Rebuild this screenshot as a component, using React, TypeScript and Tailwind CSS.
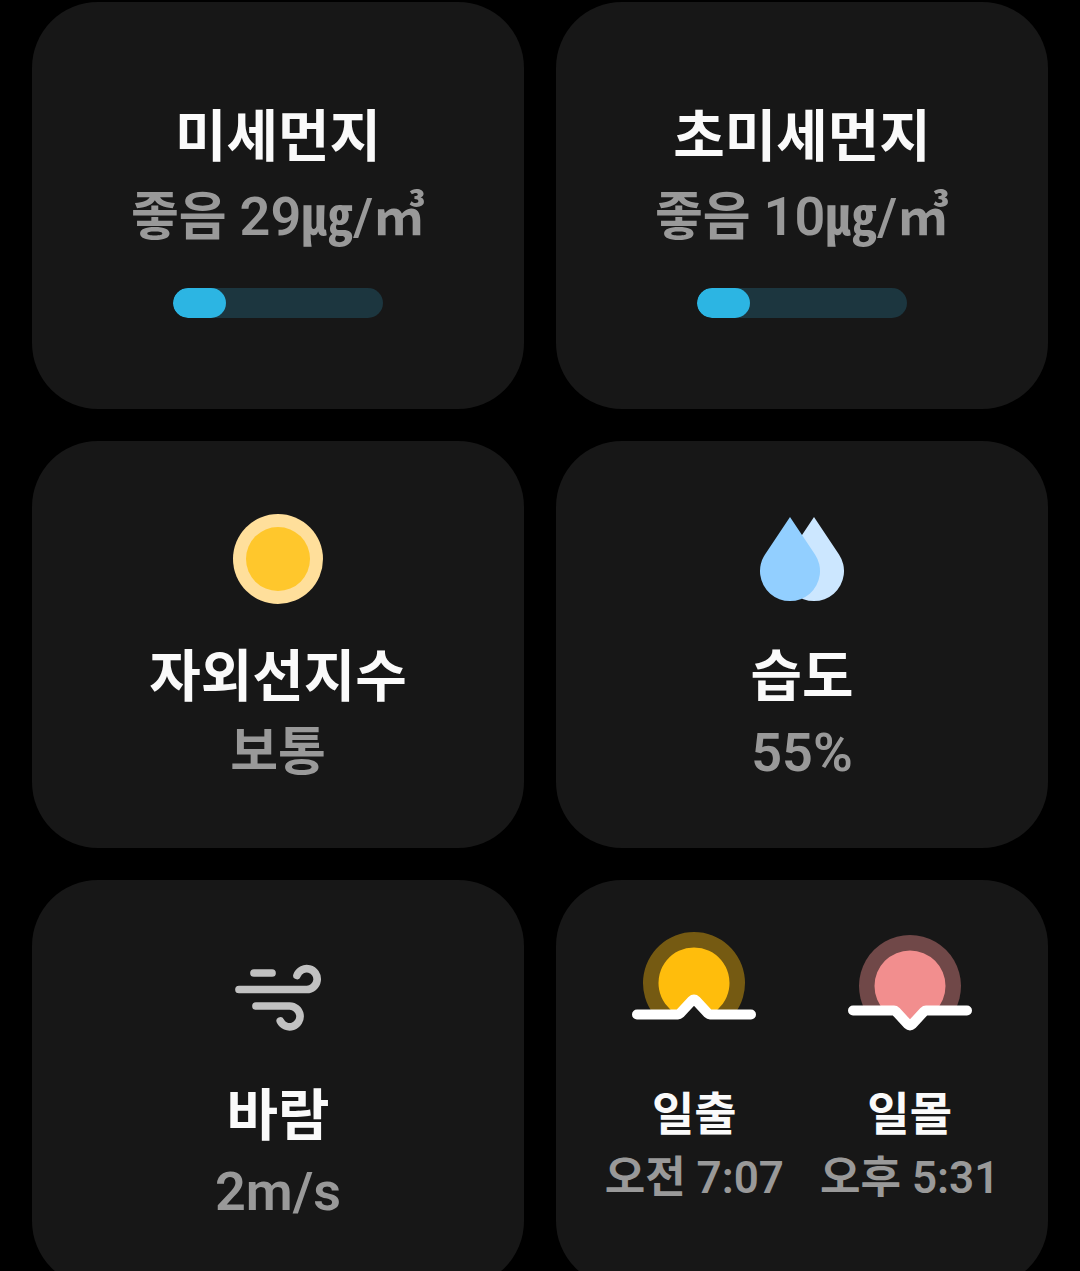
import React from 'react';

interface StatProps {
  title: string;
  value: React.ReactNode;
}

function Card({ children, className = '' }: { children: React.ReactNode; className?: string }) {
  return (
    <section className={`h-[407px] rounded-[66px] bg-[#171717] flex flex-col items-center ${className}`}>
      {children}
    </section>
  );
}

function Stat({ title, value, className = '' }: StatProps & { className?: string }) {
  return (
    <div className={`flex flex-col text-center whitespace-nowrap ${className}`}>
      <h2 className="text-[56px] leading-[76px] font-bold text-[#fafafa]">{title}</h2>
      <p className="text-[52px] leading-[76px] font-semibold text-[#999999]">{value}</p>
    </div>
  );
}

function DustCard({ title, value, level }: { title: string; value: React.ReactNode; level: number }) {
  return (
    <Card className="pt-[97px]">
      <Stat title={title} value={value} className="gap-1" />
      <div
        role="meter"
        aria-label={title}
        aria-valuenow={level}
        aria-valuemin={0}
        aria-valuemax={100}
        className="mt-8 h-[30px] w-[210px] rounded-full bg-[#1c363f] overflow-hidden"
      >
        <div className="h-full rounded-full bg-[#2cb5e3]" style={{ width: `${level}%` }} />
      </div>
    </Card>
  );
}

function IconCard({ title, value, icon }: StatProps & { icon: React.ReactNode }) {
  return (
    <Card className="pt-[68px]">
      <div className="h-[100px] flex items-center justify-center">{icon}</div>
      <Stat title={title} value={value} className="pt-[30px]" />
    </Card>
  );
}

function SunTime({ title, value, icon }: StatProps & { icon: React.ReactNode }) {
  return (
    <div className="flex flex-col items-center text-center whitespace-nowrap">
      {icon}
      <h2 className="mt-12 text-[46px] leading-[68px] font-bold text-[#fafafa]">{title}</h2>
      <p className="text-[44px] leading-[60px] font-semibold text-[#999999]">{value}</p>
    </div>
  );
}

// Latin digits run slightly larger than the Hangul next to them
const Num = ({ children }: { children: React.ReactNode }) => <span className="text-[54px]">{children}</span>;

const UvIcon = () => (
  <svg width="90" height="90" viewBox="0 0 90 90" aria-hidden="true">
    <circle cx="45" cy="45" r="45" fill="#ffdf9b" />
    <circle cx="45" cy="45" r="32" fill="#ffc72c" />
  </svg>
);

const HumidityIcon = () => (
  <svg width="84" height="86" viewBox="0 0 84 86" aria-hidden="true">
    <path d="M54 1L79 38.500A30 30 0 1 1 29 38.500Z" fill="#cce7ff" />
    <path d="M30 1L55 38.500A30 30 0 1 1 5 38.500Z" fill="#92cfff" />
  </svg>
);

const WindIcon = () => (
  <svg
    width="90"
    height="72"
    viewBox="0 0 90 72"
    fill="none"
    stroke="#c1c1c1"
    strokeWidth="7.700"
    strokeLinecap="round"
    aria-hidden="true"
  >
    <path d="M21 11H39" />
    <path d="M6 27.500H73.500A10.400 10.400 0 1 0 64 13.500" />
    <path d="M23 44H56.500A10.400 10.400 0 1 1 47.300 59" />
  </svg>
);

const SunriseIcon = () => (
  <svg width="124" height="100" viewBox="0 0 124 100" aria-hidden="true">
    <path d="M21.500 82A51 51 0 1 1 102.500 82Z" fill="#755a12" />
    <path d="M44.700 82A35.500 35.500 0 1 1 79.300 82Z" fill="#ffbd0c" />
    <path d="M46 83L62 68L78 83Z" fill="#171717" />
    <path
      d="M5 82.500H46Q47 82.500 48 81.500L60 68.500Q62 66.500 64 68.500L76 81.500Q77 82.500 78 82.500H119"
      fill="none"
      stroke="#fff"
      strokeWidth="10"
      strokeLinecap="round"
    />
  </svg>
);

const SunsetIcon = () => (
  <svg width="124" height="100" viewBox="0 0 124 100" aria-hidden="true">
    <path d="M17.500 79A51 51 0 1 1 106.500 79Z" fill="#704848" />
    <path d="M36.800 79A35.500 35.500 0 1 1 87.200 79H77L62 94L47 79Z" fill="#f28e8e" />
    <path
      d="M5 78.500H46Q47 78.500 48 79.500L60 92.500Q62 94.500 64 92.500L76 79.500Q77 78.500 78 78.500H119"
      fill="none"
      stroke="#fff"
      strokeWidth="10"
      strokeLinecap="round"
    />
  </svg>
);

export default function App() {
  return (
    <main
      lang="ko"
      className="h-screen overflow-hidden bg-black px-8 pt-0.5 font-['Roboto','Noto_Sans_CJK_KR',sans-serif]"
    >
      <div className="grid grid-cols-2 gap-8">
        <DustCard title="미세먼지" value={<>좋음 <Num>29</Num>㎍/㎥</>} level={25} />
        <DustCard title="초미세먼지" value={<>좋음 <Num>10</Num>㎍/㎥</>} level={25} />
        <IconCard title="자외선지수" value="보통" icon={<UvIcon />} />
        <IconCard title="습도" value={<Num>55%</Num>} icon={<HumidityIcon />} />
        <IconCard title="바람" value={<Num>2m/s</Num>} icon={<WindIcon />} />
        <Card className="pt-[52px]">
          <div className="flex gap-9">
            <SunTime title="일출" value="오전 7:07" icon={<SunriseIcon />} />
            <SunTime title="일몰" value="오후 5:31" icon={<SunsetIcon />} />
          </div>
        </Card>
      </div>
    </main>
  );
}
